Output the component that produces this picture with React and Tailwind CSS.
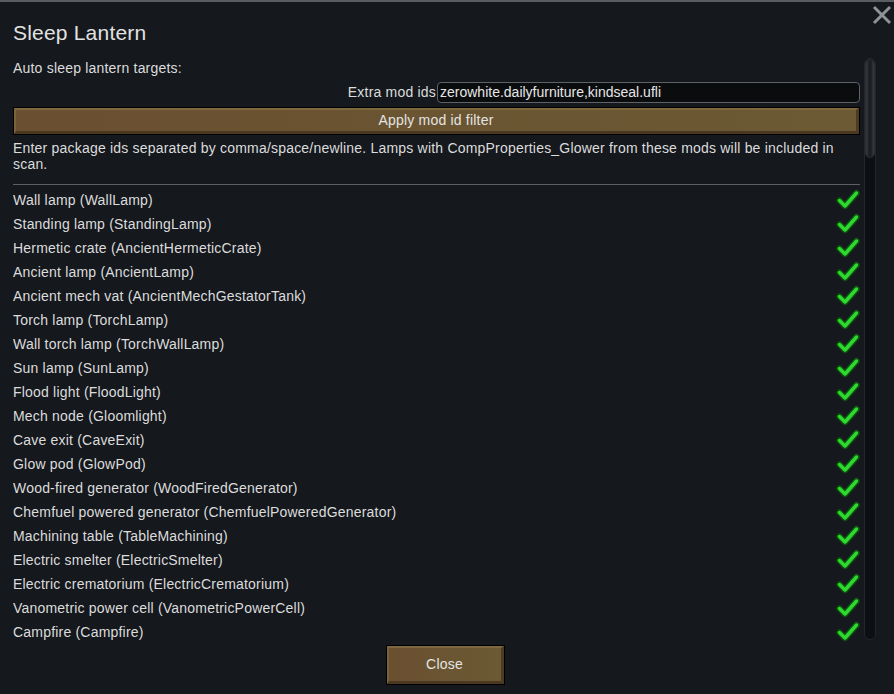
const rows = [
  'Wall lamp (WallLamp)',
  'Standing lamp (StandingLamp)',
  'Hermetic crate (AncientHermeticCrate)',
  'Ancient lamp (AncientLamp)',
  'Ancient mech vat (AncientMechGestatorTank)',
  'Torch lamp (TorchLamp)',
  'Wall torch lamp (TorchWallLamp)',
  'Sun lamp (SunLamp)',
  'Flood light (FloodLight)',
  'Mech node (Gloomlight)',
  'Cave exit (CaveExit)',
  'Glow pod (GlowPod)',
  'Wood-fired generator (WoodFiredGenerator)',
  'Chemfuel powered generator (ChemfuelPoweredGenerator)',
  'Machining table (TableMachining)',
  'Electric smelter (ElectricSmelter)',
  'Electric crematorium (ElectricCrematorium)',
  'Vanometric power cell (VanometricPowerCell)',
  'Campfire (Campfire)',
];

function Check() {
  return (
    <svg width="24" height="22" viewBox="0 0 24 22" className="shrink-0">
      <path d="M3.5 11.5 L9 17 L20.5 4" fill="none" stroke="#0d4f10" strokeWidth="6.5" strokeLinecap="round" strokeLinejoin="round" />
      <path d="M3.5 11.5 L9 17 L20.5 4" fill="none" stroke="#2fd82f" strokeWidth="3.5" strokeLinecap="round" strokeLinejoin="round" />
    </svg>
  );
}

function Button({ children, className }) {
  return (
    <div className={`border border-black bg-[linear-gradient(90deg,#6a4f31,#6b5a33)] ${className}`}>
      <div className="h-full w-full border-t-[2px] border-l-[2px] border-b-[3px] border-r-[3px] border-t-[#7f6840] border-l-[#7a623c] border-b-[#4a3820] border-r-[#4e3c22] flex items-center justify-center text-[#e4e4e4]">
        {children}
      </div>
    </div>
  );
}

export default function App() {
  return (
    <div
      className="relative w-[894px] h-[694px] overflow-hidden bg-[#15181d] border-t-[2px] border-[#5a5d62] text-[#dcdcdc] text-[14px] tracking-[0.2px]"
      style={{ fontFamily: '"Liberation Sans", Arial, sans-serif' }}
    >
      <svg width="20" height="20" viewBox="0 0 20 20" className="absolute right-[2px] top-[3px]">
        <path d="M2 2 L18 18 M18 2 L2 18" stroke="#8f9296" strokeWidth="3" />
      </svg>

      <div className="flex flex-col pl-[13px] pr-[18px]">
        <div className="pt-[18px] text-[21px] leading-[26px] text-[#e2e2e2]">Sleep Lantern</div>

        <div className="mt-[12px] flex gap-[4px] h-[588px] overflow-hidden">
          <div className="w-[847px] flex flex-col">
            <div className="leading-[20px]">Auto sleep lantern targets:</div>
            <div className="mt-[4px] flex items-center justify-end h-[21px]">
              <span className="leading-[21px]">Extra mod ids</span>
              <div className="ml-[1px] w-[423px] h-[21px] bg-[#0b0c0e] border border-[#5e6166] rounded-[4px] pl-[2px] leading-[19px] text-[#e6e6e6] tracking-normal">
                zerowhite.dailyfurniture,kindseal.ufli
              </div>
            </div>
            <Button className="mt-[4px] h-[28px]">Apply mod id filter</Button>
            <div className="mt-[5px] leading-[16px]">
              Enter package ids separated by comma/space/newline. Lamps with CompProperties_Glower from these mods will be included in scan.
            </div>
            <div className="mt-[12px] h-px bg-[#5c5f63]" />
            <div className="mt-[3px] flex flex-col">
              {rows.map((r) => (
                <div key={r} className="h-[24px] flex items-center justify-between">
                  <span>{r}</span>
                  <Check />
                </div>
              ))}
            </div>
          </div>
          <div className="w-[12px] h-[582px] rounded-[6px] bg-[#0d0f12] border border-[#23262a]">
            <div className="h-[99px] rounded-[6px] bg-[linear-gradient(90deg,#3a3c40,#1c1e21_40%,#1c1e21_60%,#3a3c40)] border border-[#2b2d31]" />
          </div>
        </div>

        <div className="flex justify-center -mt-[1px]">
          <Button className="w-[119px] h-[40px] ml-[1px] text-[14px]">Close</Button>
        </div>
      </div>
    </div>
  );
}
